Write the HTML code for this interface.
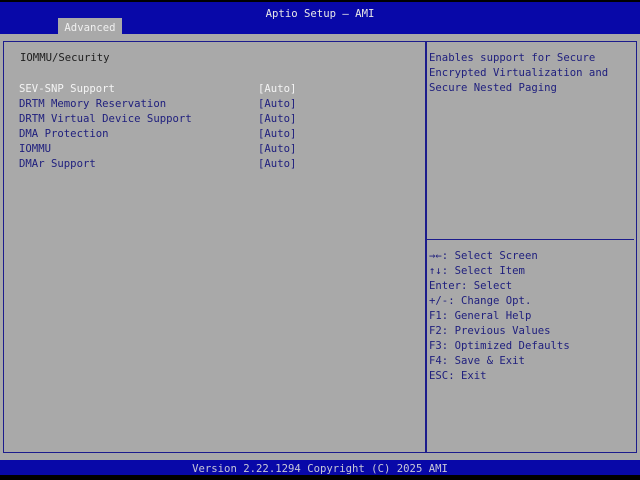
<!DOCTYPE html>
<html><head><style>
*{margin:0;padding:0}
body{width:640px;height:480px;background:#000;position:relative;overflow:hidden;font-family:"DejaVu Sans Mono","Liberation Mono",monospace;font-size:10.63px;}
.a{position:absolute;white-space:pre;line-height:15px;}
#top{position:absolute;left:0;top:2px;width:640px;height:32px;background:#0808a8;}
#main{position:absolute;left:0;top:34px;width:640px;height:426px;background:#a9a9a9;}
#bot{position:absolute;left:0;top:460px;width:640px;height:15px;background:#0808a8;}
.b{position:absolute;border:1px solid #1c1c8c;}
.t{color:#20207e}
.w{color:#f4f4f4}
</style></head><body>
<div id="top"></div>
<div id="main"></div>
<div id="bot"></div>
<div class="a" style="left:0;width:640px;text-align:center;top:6px;color:#e8e8e8">Aptio Setup – AMI</div>
<div style="position:absolute;left:58px;top:18px;width:64px;height:16px;background:#a9a9a9"></div>
<div class="a" style="left:58px;width:64px;text-align:center;top:20px;color:#f0f0f0">Advanced</div>
<div class="b" style="left:3px;top:41px;width:422px;height:410px"></div>
<div class="b" style="left:425px;top:41px;width:210px;height:410px"></div>
<div style="position:absolute;left:426px;top:239px;width:208px;height:1px;background:#1c1c8c"></div>
<div class="a t" style="left:20px;top:50px;color:#202020">IOMMU/Security</div>
<div class="a w" style="left:19px;top:81px">SEV-SNP Support</div>
<div class="a t" style="left:19px;top:96px">DRTM Memory Reservation
DRTM Virtual Device Support
DMA Protection
IOMMU
DMAr Support</div>
<div class="a w" style="left:258px;top:81px">[Auto]</div>
<div class="a t" style="left:258px;top:96px">[Auto]
[Auto]
[Auto]
[Auto]
[Auto]</div>
<div class="a t" style="left:429px;top:50px">Enables support for Secure
Encrypted Virtualization and
Secure Nested Paging</div>
<div class="a t" style="left:429px;top:248px">→←: Select Screen
↑↓: Select Item
Enter: Select
+/-: Change Opt.
F1: General Help
F2: Previous Values
F3: Optimized Defaults
F4: Save &amp; Exit
ESC: Exit</div>
<div class="a" style="left:0;width:640px;text-align:center;top:461px;color:#c8c8d8">Version 2.22.1294 Copyright (C) 2025 AMI</div>
</body></html>
